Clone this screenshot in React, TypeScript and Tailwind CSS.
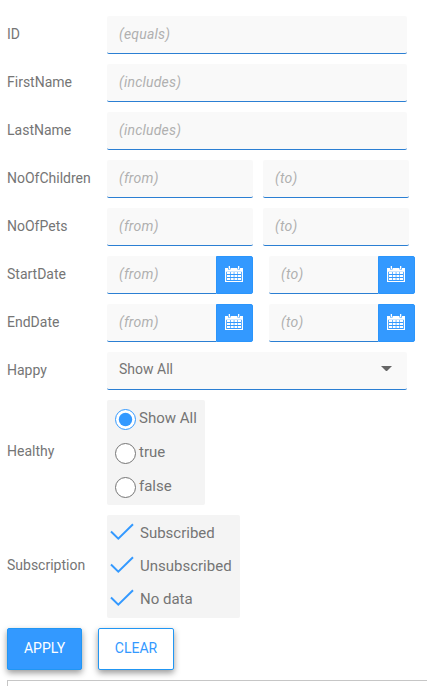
import React from 'react';

function Row({ label, children, nudge = 'pb-[2px]' }: { label: string; children: React.ReactNode; nudge?: string }) {
  return (
    <div className="flex items-center">
      <div className={`w-[100px] shrink-0 text-[14px] leading-5 text-[#757575] ${nudge}`}>{label}</div>
      {children}
    </div>
  );
}

function Field({ hint, size }: { hint: string; size: string }) {
  return (
    <input
      placeholder={hint}
      className={`${size} h-[38px] shrink-0 border-b border-[#2b7fd3] bg-[#f9f9f9] px-3 pb-[2px] text-[14px] tracking-[0.23px] text-[#757575] italic outline-none placeholder:text-[#b0b0b0]`}
    />
  );
}

function CalendarIcon() {
  return (
    <svg width="18" height="16" viewBox="0 0 18 16" fill="white">
      <path
        fillRule="evenodd"
        d="M0 2H3V3.6H5.6V2H12.4V3.6H15V2H18V16H0ZM1.2 5.8V15H16.8V5.8Z"
      />
      <path d="M3.7 0H5V3H3.7ZM13 0H14.3V3H13Z" />
      <path d="M2 6h3v2H2zM5.7 6h3v2h-3zM9.4 6h3v2h-3zM13 6h3v2h-3zM2 9h3v2H2zM5.7 9h3v2h-3zM9.4 9h3v2h-3zM13 9h3v2h-3zM2 12h3v2H2zM5.7 12h3v2h-3zM9.4 12h3v2h-3zM13 12h3v2h-3z" />
    </svg>
  );
}

function DateField({ hint }: { hint: string }) {
  return (
    <div className="flex h-[38px] shrink-0">
      <Field hint={hint} size="w-[109px] rounded-l-[2px]" />
      <button className="flex w-[37px] items-start rounded-r-[2px] border border-[#2b95fb] bg-[#3399ff] pt-[9px] pl-[8px]">
        <CalendarIcon />
      </button>
    </div>
  );
}

function Radio({ label, checked }: { label: string; checked?: boolean }) {
  return (
    <label className="flex h-[34px] items-center">
      <svg width="21" height="21" viewBox="0 0 21 21" className="mt-[3px]">
        <circle cx="10.5" cy="10.5" r="10" fill="white" stroke={checked ? '#3399ff' : '#757575'} />
        {checked && <circle cx="10.5" cy="10.5" r="6.7" fill="#3399ff" />}
      </svg>
      <span className="ml-[3px] text-[15px] leading-5 text-[#757575]">{label}</span>
    </label>
  );
}

function Check({ label }: { label: string }) {
  return (
    <label className="flex h-[33px] items-center">
      <svg width="24" height="18" viewBox="0 0 24 18" fill="none" stroke="#3399ff" strokeWidth="2" className="mb-px">
        <path d="M1 8.5L8.3 15.7L23 1.2" />
      </svg>
      <span className="ml-[6px] text-[15px] leading-5 text-[#757575]">{label}</span>
    </label>
  );
}

export default function App() {
  return (
    <main className="h-[686px] w-[427px] overflow-hidden bg-white pt-4 pl-[7px] font-['Roboto',sans-serif]">
      <form className="flex flex-col gap-[10px]">
        <Row label="ID"><Field hint="(equals)" size="w-[300px] rounded-[2px]" /></Row>
        <Row label="FirstName"><Field hint="(includes)" size="w-[300px] rounded-[2px]" /></Row>
        <Row label="LastName"><Field hint="(includes)" size="w-[300px] rounded-[2px]" /></Row>
        {['NoOfChildren', 'NoOfPets'].map((label) => (
          <Row key={label} label={label}>
            <div className="flex gap-[10px]">
              <Field hint="(from)" size="w-[146px] rounded-[2px]" />
              <Field hint="(to)" size="w-[146px] rounded-[2px]" />
            </div>
          </Row>
        ))}
        {['StartDate', 'EndDate'].map((label) => (
          <Row key={label} label={label}>
            <div className="flex gap-4">
              <DateField hint="(from)" />
              <DateField hint="(to)" />
            </div>
          </Row>
        ))}
        <Row label="Happy">
          <div className="flex h-[38px] w-[300px] items-center justify-between rounded-[2px] border-b border-[#2b7fd3] bg-[#f9f9f9] pr-[15px] pb-[3px] pl-3 text-[14px] text-[#757575]">
            <span>Show All</span>
            <svg width="11" height="5" viewBox="0 0 11 5" className="mb-[2px]">
              <path d="M0 0H11L5.5 5.5Z" fill="#666" />
            </svg>
          </div>
        </Row>
        <Row label="Healthy" nudge="pb-[4px]">
          <div className="h-[105px] w-[98px] rounded-[2px] bg-[#f4f4f4] pt-px pl-[8px]">
            <Radio label="Show All" checked />
            <Radio label="true" />
            <Radio label="false" />
          </div>
        </Row>
        <Row label="Subscription" nudge="pb-[4px]">
          <div className="h-[103px] w-[133px] rounded-[2px] bg-[#f4f4f4] pt-px pl-[3px]">
            <Check label="Subscribed" />
            <Check label="Unsubscribed" />
            <Check label="No data" />
          </div>
        </Row>
        <div className="flex gap-4">
          <button type="button" className="h-[42px] w-[75px] rounded-[2px] border border-[#2196f3] bg-[#3399ff] pb-[2px] text-[14px] text-white shadow-[0_3px_6px_rgba(0,0,0,.4)]">
            APPLY
          </button>
          <button type="button" className="h-[42px] w-[76px] rounded-[2px] border border-[#2196f3] bg-white pb-[2px] text-[14px] text-[#3399ff] shadow-[0_3px_6px_rgba(0,0,0,.4)]">
            CLEAR
          </button>
        </div>
      </form>
      <div className="mt-[10px] h-10 border-t border-l border-[#c6c6c6]" />
    </main>
  );
}
